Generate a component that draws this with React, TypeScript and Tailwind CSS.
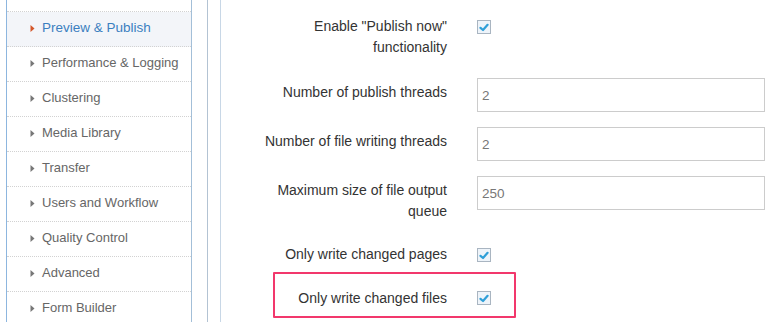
import React from 'react';

const menu = [
  'Preview & Publish',
  'Performance & Logging',
  'Clustering',
  'Media Library',
  'Transfer',
  'Users and Workflow',
  'Quality Control',
  'Advanced',
  'Form Builder',
];

function Checkbox() {
  return (
    <span className="flex h-[14px] w-[14px] items-center justify-center border border-[#a9b5c1] bg-[#eef4fa]">
      <svg width="10" height="9" viewBox="0 0 10 9" aria-hidden="true">
        <path
          d="M1.5 4.8L4 7L8.6 1.8"
          fill="none"
          stroke="#2f9fd8"
          strokeWidth="2.2"
          strokeLinecap="round"
          strokeLinejoin="round"
        />
      </svg>
    </span>
  );
}

function TextInput(props: { value: string }) {
  return (
    <div className="flex h-[34px] w-[288px] items-center border border-[#cccccc] bg-white pl-[4px] text-[13.5px] text-[#777]">
      {props.value}
    </div>
  );
}

export default function App() {
  return (
    <div
      className="flex h-[322px] w-[782px] overflow-hidden bg-white text-[13px]"
      style={{ fontFamily: '"Liberation Sans", Arial, sans-serif' }}
    >
      {/* sidebar left rule */}
      <div className="ml-[6px] h-full w-px shrink-0 bg-[#8db6df]" />
      <div className="flex h-full w-[184px] shrink-0 flex-col">
        <div className="h-[12px] shrink-0 border-b border-dotted border-[#d2d2d2]" />
        {menu.map((item, i) => {
          const active = i === 0;
          return (
            <div
              key={item}
              className={`flex h-[35px] shrink-0 items-center border-b border-dotted border-[#d2d2d2] pb-[2px] pl-[23px] ${
                active ? 'bg-[#f3f5f9] text-[#3b7fc0]' : 'text-[#666]'
              }`}
            >
              <svg width="5" height="7" viewBox="0 0 5 7" className="mr-[7px]" aria-hidden="true">
                <path d="M0.5 0L4.5 3.5L0.5 7Z" fill={active ? '#d4572a' : '#777'} />
              </svg>
              <span className={active ? 'text-[13.5px]' : 'text-[13px]'}>{item}</span>
            </div>
          );
        })}
      </div>

      {/* column rules */}
      <div className="h-full w-px shrink-0 bg-[#a3bfd8]" />
      <div className="ml-[15px] h-full w-px shrink-0 bg-[#b3c3d3]" />
      <div className="ml-[12px] h-full w-px shrink-0 bg-[#c8d7e6]" />

      {/* form */}
      <div className="flex flex-1 flex-col pt-[16px] text-[14px] leading-[21px] text-[#333]">
        <div className="flex items-start">
          <div className="w-[226px] pl-[30px] text-right">Enable "Publish now" functionality</div>
          <div className="ml-[30px] mt-[4px]">
            <Checkbox />
          </div>
        </div>

        <div className="mt-[20px] flex items-start">
          <div className="w-[226px] pl-[30px] pt-[4px] text-right">Number of publish threads</div>
          <div className="ml-[30px]">
            <TextInput value="2" />
          </div>
        </div>

        <div className="mt-[15px] flex items-start">
          <div className="w-[226px] pl-[30px] pt-[4px] text-right">Number of file writing threads</div>
          <div className="ml-[30px]">
            <TextInput value="2" />
          </div>
        </div>

        <div className="mt-[15px] flex items-start">
          <div className="w-[226px] pl-[30px] pt-[4px] text-right">Maximum size of file output queue</div>
          <div className="ml-[30px]">
            <TextInput value="250" />
          </div>
        </div>

        <div className="mt-[22px] flex items-start">
          <div className="w-[226px] pl-[30px] text-right">Only write changed pages</div>
          <div className="ml-[30px] mt-[4px]">
            <Checkbox />
          </div>
        </div>

        <div className="relative mt-[7px] flex h-[46px] shrink-0 items-start">
          <div className="w-[226px] pl-[30px] pt-[16px] text-right">Only write changed files</div>
          <div className="ml-[30px] mt-[19px]">
            <Checkbox />
          </div>
          <div className="pointer-events-none absolute left-[52px] top-0 h-[46px] w-[243px] rounded-[1px] border-2 border-[#f2386c]" />
        </div>
      </div>
    </div>
  );
}
